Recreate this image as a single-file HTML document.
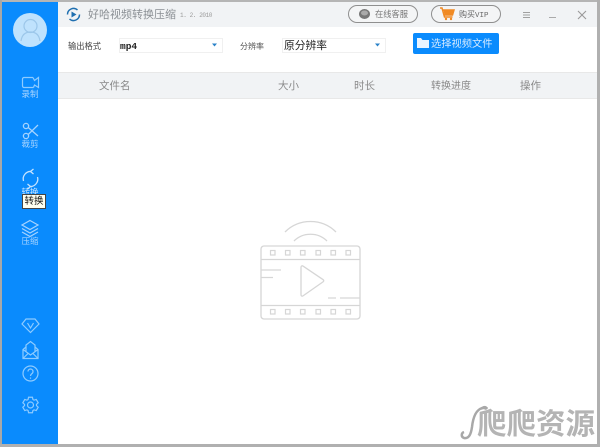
<!DOCTYPE html>
<html><head><meta charset="utf-8">
<style>
*{box-sizing:border-box;margin:0;padding:0}
html,body{width:600px;height:447px;overflow:hidden;background:#fff;font-family:"Liberation Sans","Noto Sans CJK SC",sans-serif}
#win{position:absolute;left:0;top:0;width:600px;height:447px;background:#fff}
.a{position:absolute;white-space:nowrap}
.lbl{font-size:8.500px;color:#a5d3ff;width:56px;text-align:center;left:2px;line-height:11px}
</style></head><body>
<div id="win">
<div class="a" style="left:0;top:0;width:600px;height:2px;background:#b5b5b5"></div>
<div class="a" style="left:0;top:0;width:2px;height:447px;background:#a8a8a8"></div>
<div class="a" style="left:597px;top:0;width:3px;height:447px;background:#b0b0b0"></div>
<div class="a" style="left:0;top:444px;width:600px;height:3px;background:#b0b0b0"></div>

<div class="a" style="left:58px;top:2px;width:539px;height:25px;background:#f1f3f5"></div>
<div class="a" style="left:58px;top:72px;width:539px;height:27px;background:#f1f3f5;border-top:1px solid #e8e8e8;border-bottom:1px solid #e8e8e8"></div>

<div class="a" style="left:2px;top:2px;width:56px;height:442px;background:#0a8bfd"></div>

<div class="a" style="left:119px;top:38px;width:104px;height:15px;border:1px solid #f0f0f0"></div>
<div class="a" style="left:282px;top:38px;width:104px;height:15px;border:1px solid #f0f0f0"></div>
<div class="a" style="left:413px;top:33px;width:86px;height:21px;background:#0a8bfd;border-radius:2px"></div>

<svg class="a" style="left:0;top:0" width="600" height="447" fill="none">
<!-- avatar -->
<circle cx="30" cy="30" r="17" fill="#bfe2fd"/>
<circle cx="30.500" cy="26" r="6.500" stroke="#9cc7ea" stroke-width="1.200"/>
<path d="M21 41c1-7 5-9 9.500-9s8.500 2 9.500 9" stroke="#9cc7ea" stroke-width="1.200"/>
<!-- record -->
<g stroke="#8ecbff" stroke-width="1.200">
<path d="M33 77.500H24a1.500 1.500 0 0 0-1.500 1.500v7a1.500 1.500 0 0 0 1.500 1.500h9.500"/>
<path d="M33 77.500l1.500 3 4-3v10l-4-2.500-1 2.500"/>
</g>
<!-- scissors -->
<g stroke="#a5d3ff" stroke-width="1.300">
<circle cx="26" cy="126" r="2.600"/><circle cx="26" cy="136" r="2.600"/>
<path d="M28.200 127.500L38 136M28.200 134.500L38 125"/>
</g>
<!-- convert -->
<g stroke="#c5e3ff" stroke-width="1.300">
<path d="M23.500 181a7.500 7.500 0 0 1 8-9.500"/>
<path d="M37.500 177a7.500 7.500 0 0 1-8 9.500"/>
<path d="M33.500 169l-3 2.500 3 2.500M27.500 184l3 2.500-3 2.500"/>
</g>
<!-- layers -->
<g stroke="#a5d3ff" stroke-width="1.200">
<path d="M30 220.500l8 4.500-8 4.500-8-4.500z"/>
<path d="M22 228.500l8 4.500 8-4.500M22 232l8 4.500 8-4.500"/>
</g>
<!-- diamond V -->
<g stroke="#8ecbff" stroke-width="1.200">
<path d="M26 319h9l4 5-8.500 8.500L22 324z"/>
<path d="M27.500 323l3 5 3-5"/>
<!-- mail -->
<path d="M26 347l-3 2.500v9h15v-9l-3-2.500"/>
<path d="M26 352v-7l4.500-3.500 4.500 3.500v7M23 349.500l7.500 5.500 7.500-5.500M23 358.500l5.500-5.500M38 358.500l-5.500-5.500"/>
<!-- help -->
<circle cx="30.500" cy="373.500" r="7.500"/>
<path d="M28 371.500a2.500 2.500 0 1 1 4 2c-1 .8-1.500 1.200-1.500 2.500M30.500 377.500v1.200"/>
<!-- gear -->
<circle cx="30.500" cy="405" r="3"/>
<path d="M28.060 399.520L28.560 397.240H32.440L32.940 399.520L34.030 400.150L36.250 399.440L38.190 402.790L36.470 404.370V405.630L38.190 407.210L36.250 410.560L34.030 409.850L32.940 410.480L32.440 412.760H28.560L28.060 410.480L26.970 409.850L24.750 410.560L22.810 407.210L24.530 405.630V404.370L22.810 402.790L24.750 399.440L26.970 400.150z"/>
</g>
<!-- title logo -->
<g stroke="#1f6fb0" stroke-width="1.500">
<path d="M67.500 14.500a6 6 0 0 1 10-4.500M79.500 14.500a6 6 0 0 1-10 4.500"/>
</g>
<path d="M71.500 11.500v6l5-3z" fill="#1f6fb0"/>
<!-- pills -->
<rect x="348.500" y="5.500" width="69" height="17" rx="8.500" stroke="#8f8f8f" fill="#f4f5f6"/>
<rect x="431.500" y="5.500" width="69" height="17" rx="8.500" stroke="#8f8f8f" fill="#f4f5f6"/>
<ellipse cx="364.500" cy="14" rx="5.500" ry="5" fill="#777"/>
<ellipse cx="364.500" cy="13" rx="3.500" ry="2.500" fill="#aaa"/>
<path d="M440 8h2l2.500 9h8M443 10h11l-1.500 5h-8" stroke="#f08a24" stroke-width="1.500"/>
<path d="M443.500 10.500h10l-1 4.500h-8z" fill="#f08a24"/>
<circle cx="446" cy="19" r="1.200" fill="#f08a24"/><circle cx="451" cy="19" r="1.200" fill="#f08a24"/>
<!-- window buttons -->
<path d="M523 12.500h7M523 15h7M523 17.500h7" stroke="#a0a0a0"/>
<path d="M549 17.500h7" stroke="#aaa"/>
<path d="M578 11l8 8M586 11l-8 8" stroke="#999" stroke-width="1.100"/>
<!-- folder -->
<path d="M417 38h4l1.500 2h6.500v8H417z" fill="#eaf4ff"/>
<!-- dropdown arrows -->
<path d="M212 43.500h5l-2.500 3z" fill="#2a82c8"/>
<path d="M375 43.500h5l-2.500 3z" fill="#2a82c8"/>
<!-- empty illustration -->
<g stroke="#d6d6d6" stroke-width="1.300">
<rect x="261" y="246" width="99" height="73" rx="3"/>
<path d="M261 259.500h99M261 305.500h99"/>
<path d="M261 270h20M261 277.500h12M328 298h8M340 298h20"/>
<path d="M301 267.500c0-1.500 1-2 2-1.400l20 13.500c1 .7 1 1.600 0 2.300l-20 14c-1 .7-2 0-2-1.300z"/>
<path d="M285 232c14-14 37-14 51 0"/>
<path d="M294 241c9-9 24-9 33 0"/>
<g stroke-width="1.200">
<rect x="270.500" y="250.500" width="4.500" height="4.500"/><rect x="285.500" y="250.500" width="4.500" height="4.500"/><rect x="300.500" y="250.500" width="4.500" height="4.500"/><rect x="316" y="250.500" width="4.500" height="4.500"/><rect x="331" y="250.500" width="4.500" height="4.500"/><rect x="346" y="250.500" width="4.500" height="4.500"/>
<rect x="270.500" y="309.500" width="4.500" height="4.500"/><rect x="285.500" y="309.500" width="4.500" height="4.500"/><rect x="300.500" y="309.500" width="4.500" height="4.500"/><rect x="316" y="309.500" width="4.500" height="4.500"/><rect x="331" y="309.500" width="4.500" height="4.500"/><rect x="346" y="309.500" width="4.500" height="4.500"/>
</g>
</g>
<!-- watermark lizard -->
<path d="M464 432c-3 1-3 5 0 6 5 1 7-4 8-11 1-9 4-17 10-19 2-.7 4-.5 5 1" stroke="#a8a8a8" stroke-width="2.500"/>
<path d="M482 407c2-2 5-1 6 1l-2 2c-2-1-3-1-5 0z" fill="#a8a8a8"/>
</svg>

<div class="a" style="left:88px;top:7px;font-size:11px;line-height:16px;color:#8a8f94">好哈视频转换压缩</div>
<div class="a" style="left:180px;top:11px;font-size:6px;line-height:9px;letter-spacing:-.4px;color:#9a9a9a;font-family:'Liberation Mono',monospace">1. 2. 2010</div>
<div class="a" style="left:375px;top:8px;font-size:8.250px;line-height:13px;color:#777">在线客服</div>
<div class="a" style="left:459px;top:8px;font-size:8px;line-height:13px;color:#666">购买<span style="font-family:'Liberation Mono',monospace;font-size:7.500px">VIP</span></div>

<div class="a" style="left:68px;top:41px;font-size:8.250px;line-height:12px;color:#444">输出格式</div>
<div class="a" style="left:120px;top:40px;font-size:9.500px;line-height:13px;color:#222;font-weight:bold;font-family:'Liberation Mono',monospace">mp4</div>
<div class="a" style="left:240px;top:41px;font-size:8px;line-height:12px;color:#555">分辨率</div>
<div class="a" style="left:284px;top:39px;font-size:10.750px;line-height:14px;color:#222">原分辨率</div>
<div class="a" style="left:431px;top:37px;font-size:10.250px;line-height:15px;color:#d5eaff">选择视频文件</div>

<div class="a" style="left:99px;top:79px;font-size:10.500px;line-height:14px;color:#8a8a8a">文件名</div>
<div class="a" style="left:278px;top:79px;font-size:10.500px;line-height:14px;color:#8a8a8a">大小</div>
<div class="a" style="left:354px;top:79px;font-size:10.500px;line-height:14px;color:#8a8a8a">时长</div>
<div class="a" style="left:431px;top:80px;font-size:10px;line-height:14px;color:#8a8a8a">转换进度</div>
<div class="a" style="left:520px;top:79px;font-size:10.500px;line-height:14px;color:#8a8a8a">操作</div>

<div class="a lbl" style="top:89px">录制</div>
<div class="a lbl" style="top:139px">裁剪</div>
<div class="a lbl" style="top:187px;color:#c5e3ff">转换</div>
<div class="a lbl" style="top:236px">压缩</div>

<div class="a" style="left:22px;top:194px;width:24px;height:15px;background:#fffff0;border:1px solid #444;font-size:9.500px;line-height:13px;text-align:center;color:#111">转换</div>

<div class="a" style="left:477px;top:402px;font-size:29.500px;line-height:40px;color:#b4b4b4;font-weight:bold;font-family:'Noto Sans CJK SC',sans-serif">爬爬资源</div>
</div>
</body></html>
